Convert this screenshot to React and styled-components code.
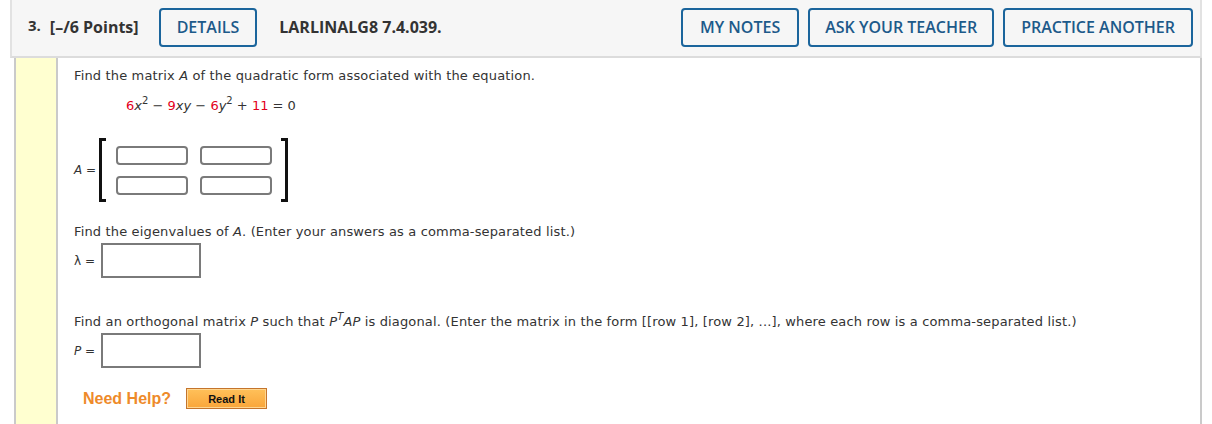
import React from "react";
import styled, { createGlobalStyle } from "styled-components";

const Global = createGlobalStyle`
  html, body { margin: 0; padding: 0; background: #fff; }
  body { font-family: "DejaVu Sans", Verdana, sans-serif; }
`;

const Page = styled.div`
  width: 1212px;
  height: 424px;
  overflow: hidden;
  background: #fff;
`;

const Header = styled.div`
  margin-left: 10px;
  width: 1192px;
  height: 58px;
  display: flex;
  align-items: center;
  padding: 0 7px 2px 16px;
  box-sizing: border-box;
  background: #f6f6f6;
  border-left: 2px solid #e2e2e2;
  border-right: 2px solid #e2e2e2;
  border-bottom: 2px solid #dcdcdc;
  font-family: "Open Sans", sans-serif;
  color: #333;
`;

const Num = styled.span`
  font-size: 15px;
  font-weight: 700;
  margin-right: 9px;
  padding-bottom: 5px;
`;

const Points = styled.span`
  font-size: 16px;
  font-weight: 700;
  margin-right: 20px;
`;

const Code = styled.span`
  font-size: 16px;
  font-weight: 700;
  margin-left: 22px;
`;

const Spacer = styled.div`
  flex: 1;
`;

const OutlineButton = styled.button`
  height: 39px;
  padding: 0 ${(p) => p.$pad || 17}px;
  margin-left: ${(p) => p.$ml || 0}px;
  border: 2px solid #1b659c;
  border-radius: 4px;
  background: transparent;
  color: #1d5a8a;
  font-family: "Open Sans", sans-serif;
  font-size: 16px;
  font-weight: 600;
  cursor: pointer;
  white-space: nowrap;
`;

const Body = styled.div`
  margin-left: 14px;
  width: 1188px;
  display: flex;
  min-height: 380px;
  border-left: 2px solid #cacaca;
  border-right: 2px solid #cacaca;
  box-sizing: border-box;
`;

const Strip = styled.div`
  width: 40px;
  flex-shrink: 0;
  background: #ffffd0;
  border-right: 2px solid #cacaca;
`;

const Content = styled.div`
  flex: 1;
  padding: 10px 16px 0 16px;
  color: #333;
  font-size: 13px;
  line-height: 16px;
`;

const Para = styled.div`
  margin-top: ${(p) => p.$mt || 0}px;
  letter-spacing: 0.15px;
`;

const V = styled.i``;

const Sup = styled.sup`
  font-size: 10px;
  line-height: 0;
  vertical-align: 6px;
`;

const Equation = styled.div`
  margin: 14px 0 0 52px;
  color: #333;
`;

const Red = styled.span`
  color: #e3001b;
`;

const Row = styled.div`
  display: flex;
  align-items: center;
  margin-top: ${(p) => p.$mt || 0}px;
`;

const Label = styled.span`
  margin-right: ${(p) => p.$mr || 3}px;
  font-size: 12px;
`;

const Bracket = styled.div`
  width: 4px;
  height: 58px;
  border: 3px solid #111;
  ${(p) => (p.$side === "left" ? "border-right: none;" : "border-left: none;")}
`;

const MatrixGrid = styled.div`
  display: grid;
  grid-template-columns: 72px 72px;
  grid-auto-rows: 19px;
  column-gap: 12px;
  row-gap: 11px;
  margin: 1px 9px 0 10px;
`;

const CellInput = styled.div`
  border: 2px solid #7a7a7a;
  border-radius: 4px;
  box-sizing: border-box;
  background: #fff;
`;

const BoxInput = styled.div`
  width: 100px;
  height: 35px;
  border: 2px solid #7a7a7a;
  box-sizing: border-box;
  background: #fff;
`;

const HelpRow = styled.div`
  display: flex;
  align-items: center;
  margin: 20px 0 0 9px;
`;

const NeedHelp = styled.span`
  font-family: "Liberation Sans", Arial, sans-serif;
  font-weight: 700;
  font-size: 16px;
  color: #ee8a2a;
  margin-right: 15px;
`;

const ReadIt = styled.button`
  width: 81px;
  height: 21px;
  padding: 0;
  border: 1px solid #c4742c;
  background: linear-gradient(#ffc15a, #f9a53a);
  box-shadow: inset 0 0 0 1px #ffd690;
  font-family: "Liberation Sans", Arial, sans-serif;
  font-weight: 700;
  font-size: 11px;
  color: #111;
`;

export default function App() {
  return (
    <Page>
      <Global />
      <Header>
        <Num>3.</Num>
        <Points>[–/6 Points]</Points>
        <OutlineButton $pad={16}>DETAILS</OutlineButton>
        <Code>LARLINALG8 7.4.039.</Code>
        <Spacer />
        <OutlineButton>MY NOTES</OutlineButton>
        <OutlineButton $ml={9} $pad={15}>ASK YOUR TEACHER</OutlineButton>
        <OutlineButton $ml={9} $pad={16}>PRACTICE ANOTHER</OutlineButton>
      </Header>
      <Body>
        <Strip />
        <Content>
          <Para>
            Find the matrix <V>A</V> of the quadratic form associated with the equation.
          </Para>
          <Equation>
            <Red>6</Red>
            <V>x</V>
            <Sup>2</Sup> − <Red>9</Red>
            <V>xy</V> − <Red>6</Red>
            <V>y</V>
            <Sup>2</Sup> + <Red>11</Red> = 0
          </Equation>
          <Row $mt={24}>
            <Label>
              <V>A</V> =
            </Label>
            <Bracket $side="left" />
            <MatrixGrid>
              <CellInput />
              <CellInput />
              <CellInput />
              <CellInput />
            </MatrixGrid>
            <Bracket $side="right" />
          </Row>
          <Para $mt={22}>
            Find the eigenvalues of <V>A</V>. (Enter your answers as a comma-separated list.)
          </Para>
          <Row $mt={3}>
            <Label $mr={6}>λ =</Label>
            <BoxInput />
          </Row>
          <Para $mt={36}>
            Find an orthogonal matrix <V>P</V> such that <V>P</V>
            <Sup>
              <V>T</V>
            </Sup>
            <V>AP</V> is diagonal. (Enter the matrix in the form [[row 1], [row 2], ...], where
            each row is a comma-separated list.)
          </Para>
          <Row $mt={3}>
            <Label $mr={6}>
              <V>P</V> =
            </Label>
            <BoxInput />
          </Row>
          <HelpRow>
            <NeedHelp>Need Help?</NeedHelp>
            <ReadIt>Read It</ReadIt>
          </HelpRow>
        </Content>
      </Body>
    </Page>
  );
}
